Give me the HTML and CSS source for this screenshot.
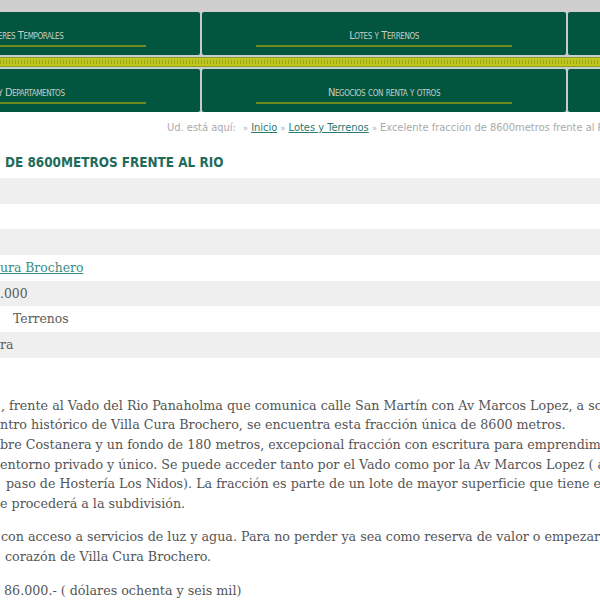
FILE: index.html
```html
<!DOCTYPE html>
<html lang="es">
<head>
<meta charset="utf-8">
<title>Excelente fracción de 8600metros frente al Río</title>
<link rel="stylesheet" href="styles.css">
</head>
<body>
<div class="topbar"></div>
<nav class="menu">
  <div class="menu-row">
    <a class="menu-item" href="#"><span class="menu-label">Alquileres Temporales</span><span class="menu-line"></span></a>
    <a class="menu-item" href="#"><span class="menu-label">Lotes y Terrenos</span><span class="menu-line"></span></a>
    <a class="menu-item" href="#"><span class="menu-label">Campos</span><span class="menu-line"></span></a>
  </div>
  <div class="stripe"></div>
  <div class="menu-row">
    <a class="menu-item" href="#"><span class="menu-label">Casas y Departamentos</span><span class="menu-line"></span></a>
    <a class="menu-item" href="#"><span class="menu-label">Negocios con renta y otros</span><span class="menu-line"></span></a>
    <a class="menu-item" href="#"><span class="menu-label">Contacto</span><span class="menu-line"></span></a>
  </div>
</nav>
<div class="crumbs">
  <span class="crumb-here">Ud. está aquí:</span>
  <span class="crumb-sep">»</span> <a class="crumb-link" href="#">Inicio</a>
  <span class="crumb-sep">»</span> <a class="crumb-link" href="#">Lotes y Terrenos</a>
  <span class="crumb-sep">»</span> <span class="crumb-current">Excelente fracción de 8600metros frente al Río</span>
</div>
<h1 class="title">DE 8600METROS FRENTE AL RIO</h1>
<table class="specs">
  <tr><td></td></tr>
  <tr><td></td></tr>
  <tr><td></td></tr>
  <tr><td><a class="spec-link" href="#">ura Brochero</a></td></tr>
  <tr><td>.000</td></tr>
  <tr><td class="indent">Terrenos</td></tr>
  <tr><td>ra</td></tr>
</table>
<div class="desc">
  <p><span class="l1">, frente al Vado del Rio Panaholma que comunica calle San Martín con Av Marcos Lopez, a solo</span><br>
  ntro histórico de Villa Cura Brochero, se encuentra esta fracción única de 8600 metros.<br>
  bre Costanera y un fondo de 180 metros, excepcional fracción con escritura para emprendimiento<br>
  <span class="l4">entorno privado y único. Se puede acceder tanto por el Vado como por la Av Marcos Lopez ( a</span><br>
  <span class="l5">paso de Hostería Los Nidos). La fracción es parte de un lote de mayor superficie que tiene escritura</span><br>
  e procederá a la subdivisión.</p>
  <p><span class="l1">con acceso a servicios de luz y agua. Para no perder ya sea como reserva de valor o empezar</span><br>
  <span class="l7">corazón de Villa Cura Brochero.</span></p>
  <p><span class="l6">86.000.- ( dólares ochenta y seis mil)</span></p>
</div>
</body>
</html>
```
FILE: styles.css
```css
html, body {
  margin: 0;
  padding: 0;
  background: #ffffff;
}
body {
  width: 600px;
  height: 600px;
  overflow: hidden;
}
.topbar {
  height: 12px;
  background: #cfcfcf;
}
.menu {
  background: #c4cccc;
  overflow: hidden;
}
.menu-row {
  display: grid;
  grid-template-columns: repeat(3, 364px);
  column-gap: 2px;
  margin-left: -164px;
  height: 43px;
}
.menu-item {
  background: #02553f;
  border-radius: 2px;
  display: flex;
  flex-direction: column;
  align-items: center;
  padding-top: 17px;
  box-sizing: border-box;
  text-decoration: none;
}
.menu-label {
  font-family: "DejaVu Sans Condensed", "DejaVu Sans", sans-serif;
  font-stretch: condensed;
  font-variant: small-caps;
  font-size: 11px;
  line-height: 13px;
  letter-spacing: -0.4px;
  color: #c4cec6;
  white-space: nowrap;
}
.menu-line {
  display: block;
  width: 256px;
  height: 2px;
  margin-top: 3px;
  background: #6f8a1e;
}
.stripe {
  height: 14px;
  background:
    repeating-linear-gradient(90deg, rgba(120,140,30,0.55) 0 1px, transparent 1px 3px) 0 5px / 100% 4px no-repeat,
    linear-gradient(to bottom, #c6cece 0 2px, #8e9c2c 2px 3px, #c0c71c 3px 11px, #8e9c2c 11px 12px, #c6cece 12px 14px);
}
.crumbs {
  padding: 9px 0 0 167px;
  font-family: "DejaVu Sans Condensed", "DejaVu Sans", sans-serif;
  font-stretch: condensed;
  font-size: 11px;
  line-height: 14px;
  color: #aaaaaa;
  white-space: nowrap;
}
.crumb-here {
  margin-right: 4px;
}
.crumb-sep {
  color: #b0b0b0;
  font-size: 9px;
}
.crumb-link {
  color: #2a7a6e;
  text-decoration: underline;
}
.title {
  margin: 19px 0 6px 5px;
  font-family: "DejaVu Sans Condensed", "DejaVu Sans", sans-serif;
  font-stretch: condensed;
  font-size: 13.4px;
  line-height: 18px;
  font-weight: bold;
  color: #1f6b5a;
  white-space: nowrap;
}
.specs {
  width: 100%;
  border-collapse: collapse;
}
.specs tr:nth-child(odd) {
  background: #efefef;
}
.specs td {
  height: 25.7px;
  padding: 0;
  font-family: "DejaVu Serif", serif;
  font-size: 12.4px;
  line-height: 16px;
  color: #5a5a5a;
  white-space: nowrap;
}
.specs td.indent {
  padding-left: 13px;
}
.spec-link {
  color: #3a8c82;
  text-decoration: underline;
}
.desc {
  margin-top: 38px;
  font-family: "DejaVu Serif", serif;
  font-size: 12.7px;
  line-height: 19.6px;
  color: #555555;
  white-space: nowrap;
}
.desc p {
  margin: 0 0 14px;
}
.l1 {
  padding-left: 1px;
}
.l4 {
  padding-left: 0;
}
.l5 {
  padding-left: 6px;
}
.l6 {
  padding-left: 4px;
}
.l7 {
  padding-left: 5px;
}
```
